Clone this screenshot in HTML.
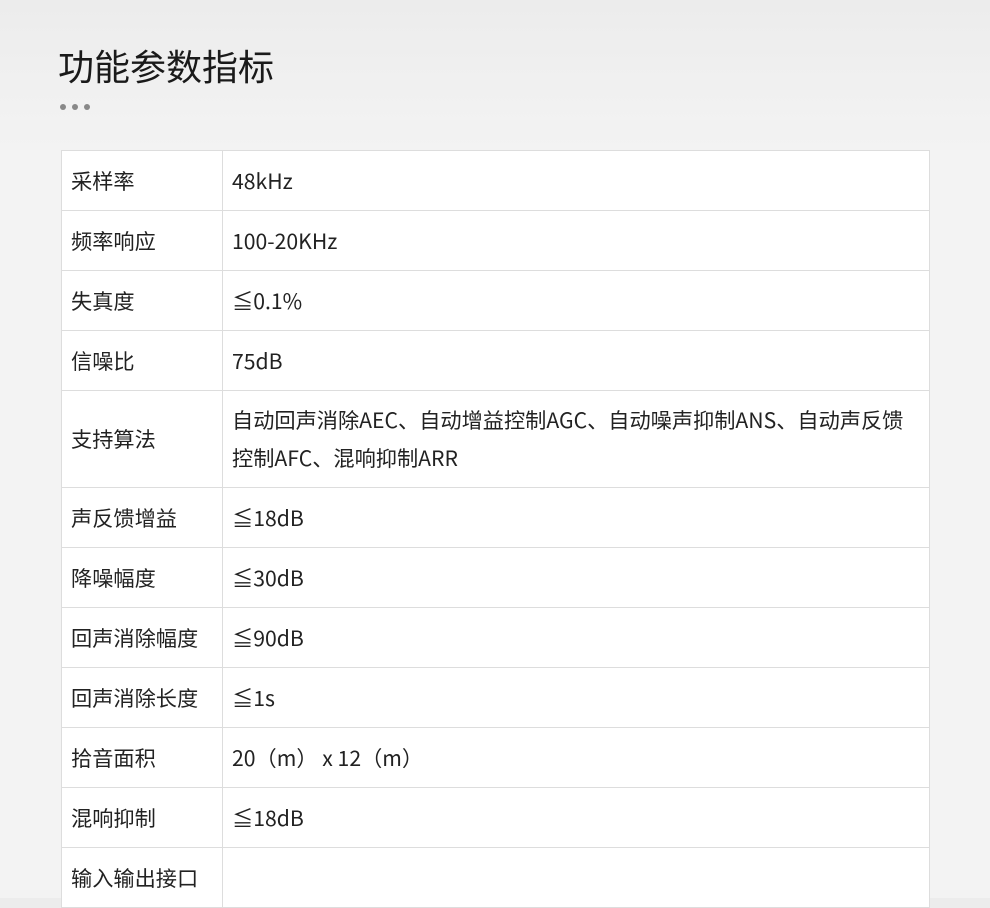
<!DOCTYPE html>
<html><head><meta charset="utf-8"><style>
html,body{margin:0;padding:0}
body{width:990px;height:898px;overflow:hidden;background:linear-gradient(#ececec 0,#f3f3f3 150px,#f3f3f3 100%);font-family:"Noto Sans CJK SC",sans-serif;color:#222;position:relative}
h1{position:absolute;left:58px;top:42px;margin:0;font-size:36px;font-weight:400;line-height:46px;color:#1a1a1a;font-family:"Noto Sans CJK SC",sans-serif}
.dots{position:absolute;left:60px;top:104px}
.dots i{display:inline-block;width:6px;height:6px;border-radius:50%;background:#888;margin-right:6px;vertical-align:top}
table{position:absolute;left:61px;top:150px;width:869px;border-collapse:collapse;background:#fff;font-size:21.2px}
td{border:1px solid #ddd;height:59px;padding:0 0 0 9px;line-height:28px;font-family:"Noto Sans CJK SC",sans-serif;color:#222;white-space:nowrap}
td:first-child{width:151px}
td.t{height:96px;line-height:38px}
</style></head><body>
<h1>功能参数指标</h1>
<div class="dots"><i></i><i></i><i></i></div>
<table>
<tr><td>采样率</td><td>48kHz</td></tr>
<tr><td>频率响应</td><td>100-20KHz</td></tr>
<tr><td>失真度</td><td>≦0.1%</td></tr>
<tr><td>信噪比</td><td>75dB</td></tr>
<tr><td>支持算法</td><td class="t">自动回声消除AEC、自动增益控制AGC、自动噪声抑制ANS、自动声反馈<br>控制AFC、混响抑制ARR</td></tr>
<tr><td>声反馈增益</td><td>≦18dB</td></tr>
<tr><td>降噪幅度</td><td>≦30dB</td></tr>
<tr><td>回声消除幅度</td><td>≦90dB</td></tr>
<tr><td>回声消除长度</td><td>≦1s</td></tr>
<tr><td>拾音面积</td><td>20（m） x 12（m）</td></tr>
<tr><td>混响抑制</td><td>≦18dB</td></tr>
<tr><td>输入输出接口</td><td></td></tr>
</table>
</body></html>
